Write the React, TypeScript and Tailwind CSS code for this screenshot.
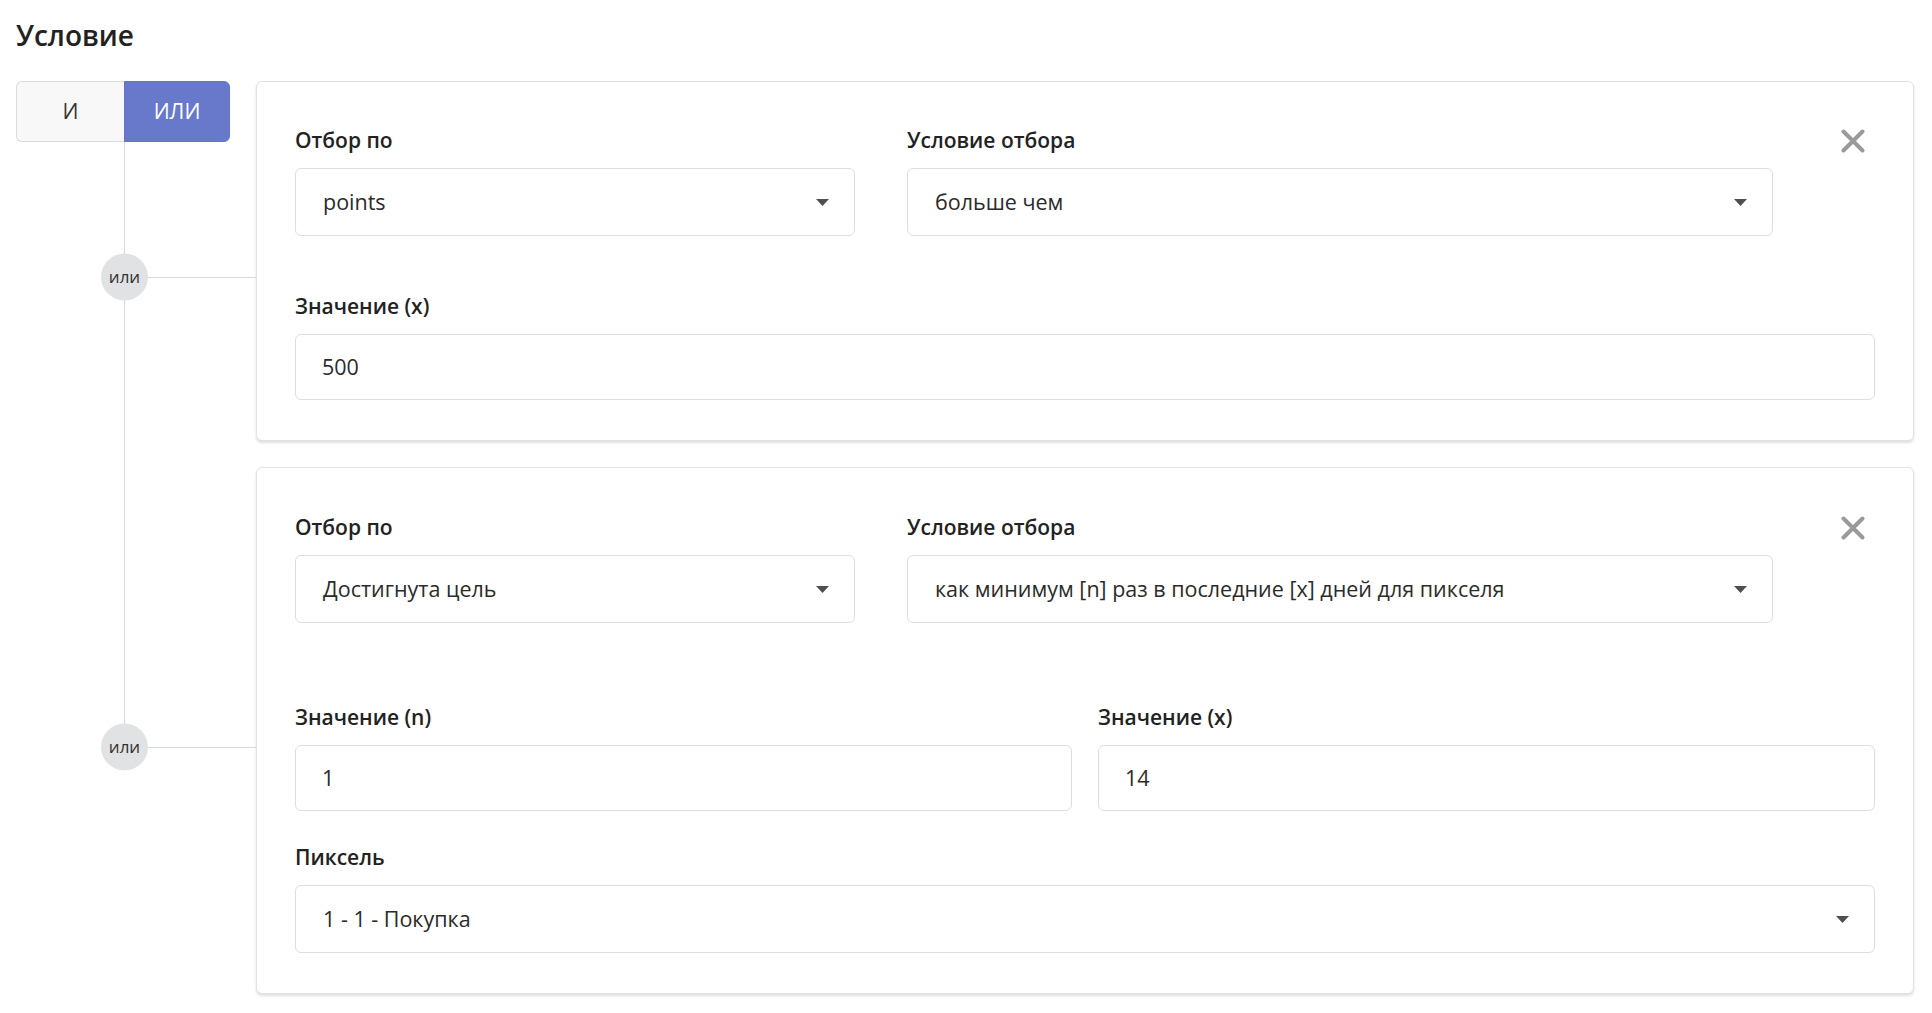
import React from 'react';

const Arrow = () => (
    <svg width="13" height="7" viewBox="0 0 13 7" className="shrink-0">
        <polygon points="0,0 13,0 6.5,7" fill="#4f4f4f" />
    </svg>
);

const CloseIcon = () => (
    <svg width="24" height="24" viewBox="0 0 24 24">
        <path d="M2.5 2.5 L21.5 21.5 M21.5 2.5 L2.5 21.5" stroke="#9a9a9a" strokeWidth="4" strokeLinecap="round" />
    </svg>
);

const Label = ({ children }: { children: React.ReactNode }) => (
    <div className="text-[21px] font-semibold leading-[30px] text-[#222] mb-[13px]">{children}</div>
);

const Select = ({ value, className = '' }: { value: string; className?: string }) => (
    <div className={`h-[68px] flex items-center justify-between pl-[27px] pr-[25px] bg-white border border-[#dedede] rounded-[6px] ${className}`}>
        <span className="text-[21.5px] text-[#2b2b2b] whitespace-nowrap">{value}</span>
        <Arrow />
    </div>
);

const Input = ({ value }: { value: string }) => (
    <div className="h-[66px] flex items-center pl-[26px] bg-white border border-[#dedede] rounded-[6px]">
        <span className="text-[21.5px] text-[#2b2b2b]">{value}</span>
    </div>
);

const OrBadge = () => (
    <>
        <div className="absolute left-[108px] right-0 top-[calc(50%+16px)] h-px bg-[#d9d9d9]" />
        <div className="absolute left-[85px] top-[calc(50%+16px)] -translate-y-1/2 w-[47px] h-[47px] rounded-full bg-[#e1e2e4] flex items-center justify-center text-[17px] text-[#333] leading-none pb-[2px]">
            или
        </div>
    </>
);

const Card = ({ children, className = '' }: { children: React.ReactNode; className?: string }) => (
    <div className={`flex-1 bg-white border border-[#e2e2e2] rounded-[6px] shadow-[0_2px_3px_rgba(0,0,0,0.13)] px-[38px] ${className}`}>
        {children}
    </div>
);

export default function App() {
    return (
        <div className="min-h-screen bg-white pl-4 pr-[18px] pt-[18px] font-['Open_Sans',sans-serif]">
            <h2 className="text-[28px] font-semibold leading-[34px] text-[#222]">Условие</h2>

            <div className="mt-[29px] flex flex-col">
                {/* первое условие */}
                <div className="flex">
                    <div className="relative w-[240px] shrink-0">
                        <div className="absolute left-[108px] top-[61px] -bottom-[26px] w-px bg-[#d9d9d9]" />
                        <OrBadge />
                        <div className="relative flex h-[61px] w-[214px] text-[21px]">
                            <button className="w-[108px] bg-[#f8f8f8] border border-r-0 border-[#dcdcdc] rounded-l-[6px] text-[#333]">
                                И
                            </button>
                            <button className="flex-1 bg-[#6878cb] border border-[#6474c6] rounded-r-[6px] text-white">
                                ИЛИ
                            </button>
                        </div>
                    </div>
                    <Card className="pt-[43px] pb-[40px]">
                        <div className="flex">
                            <div className="w-[560px]">
                                <Label>Отбор по</Label>
                                <Select value="points" />
                            </div>
                            <div className="w-[866px] ml-[52px]">
                                <Label>Условие отбора</Label>
                                <Select value="больше чем" />
                            </div>
                            <div className="flex-1 flex justify-end pr-[10px] pt-[4px]">
                                <button className="h-[24px]">
                                    <CloseIcon />
                                </button>
                            </div>
                        </div>
                        <div className="mt-[55px]">
                            <Label>Значение (x)</Label>
                            <Input value="500" />
                        </div>
                    </Card>
                </div>

                {/* второе условие */}
                <div className="flex mt-[26px]">
                    <div className="relative w-[240px] shrink-0">
                        <div className="absolute left-[108px] top-0 h-[calc(50%+16px)] w-px bg-[#d9d9d9]" />
                        <OrBadge />
                    </div>
                    <Card className="pt-[44px] pb-[40px]">
                        <div className="flex">
                            <div className="w-[560px]">
                                <Label>Отбор по</Label>
                                <Select value="Достигнута цель" />
                            </div>
                            <div className="w-[866px] ml-[52px]">
                                <Label>Условие отбора</Label>
                                <Select value="как минимум [n] раз в последние [x] дней для пикселя" />
                            </div>
                            <div className="flex-1 flex justify-end pr-[10px] pt-[4px]">
                                <button className="h-[24px]">
                                    <CloseIcon />
                                </button>
                            </div>
                        </div>
                        <div className="mt-[79px] grid grid-cols-2 gap-x-[26px]">
                            <div>
                                <Label>Значение (n)</Label>
                                <Input value="1" />
                            </div>
                            <div>
                                <Label>Значение (x)</Label>
                                <Input value="14" />
                            </div>
                        </div>
                        <div className="mt-[31px]">
                            <Label>Пиксель</Label>
                            <Select value="1 - 1 - Покупка" />
                        </div>
                    </Card>
                </div>
            </div>
        </div>
    );
}
